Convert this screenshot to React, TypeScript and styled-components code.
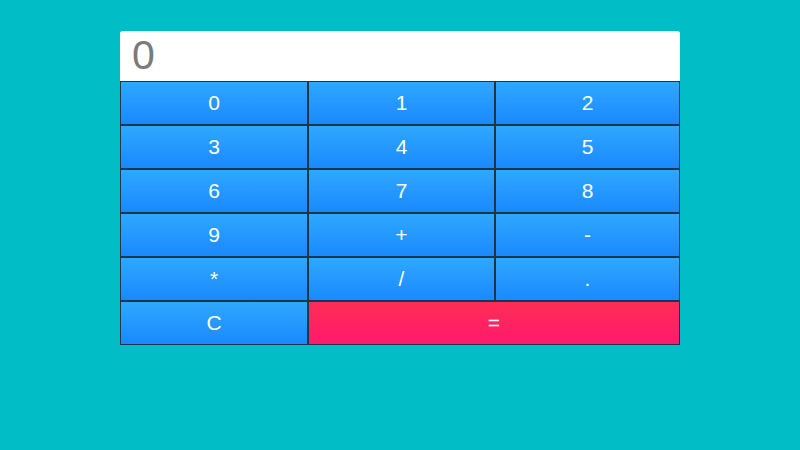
import styled, { createGlobalStyle } from 'styled-components';
import { useState } from 'react';

const GlobalStyles = createGlobalStyle`
  html, body {
    margin: 0;
    padding: 0;
    background-color: #00bdc6;
    font-family: 'Liberation Sans', Arial, sans-serif;
  }
`;

const Page = styled.div`
  padding-top: 31px;
`;

const Calculator = styled.div`
  width: 560px;
  margin: 0 auto;
`;

const Display = styled.div`
  height: 50px;
  padding: 0 12px;
  background-color: #ffffff;
  border-radius: 3px 3px 0 0;
  color: #7a7a7a;
  font-size: 41px;
  line-height: 48px;
  white-space: nowrap;
`;

const Keys = styled.div`
  display: grid;
  grid-template-columns: 188px 187px 185px;
  grid-auto-rows: 44px;
`;

const Key = styled.button<{ $wide?: boolean; $accent?: boolean }>`
  grid-column: ${(props) => (props.$wide ? 'span 2' : 'auto')};
  border: 1px solid #1f3447;
  margin: 0;
  padding: 0;
  color: #ffffff;
  font-family: inherit;
  font-size: 21px;
  cursor: pointer;
  background: ${(props) =>
    props.$accent
      ? 'linear-gradient(to bottom, #ff2d55, #ff1a6e)'
      : 'linear-gradient(to bottom, #2ea8ff, #1a89ff)'};

  &:active {
    filter: brightness(0.92);
  }
`;

const keys = ['0', '1', '2', '3', '4', '5', '6', '7', '8', '9', '+', '-', '*', '/', '.'];

export default function App() {
  const [value, setValue] = useState<string>('0');

  const press = (k: string) => {
    setValue((prev) => (prev === '0' && k !== '.' ? k : prev + k));
  };

  const evaluate = () => {
    try {
      // only digits and operators can reach here
      const result = Function(`"use strict"; return (${value})`)();
      setValue(String(result));
    } catch {
      setValue('0');
    }
  };

  return (
    <>
      <GlobalStyles />
      <Page>
        <Calculator>
          <Display>{value}</Display>
          <Keys>
            {keys.map((k) => (
              <Key key={k} onClick={() => press(k)}>
                {k}
              </Key>
            ))}
            <Key onClick={() => setValue('0')}>C</Key>
            <Key $wide $accent onClick={evaluate}>
              =
            </Key>
          </Keys>
        </Calculator>
      </Page>
    </>
  );
}
